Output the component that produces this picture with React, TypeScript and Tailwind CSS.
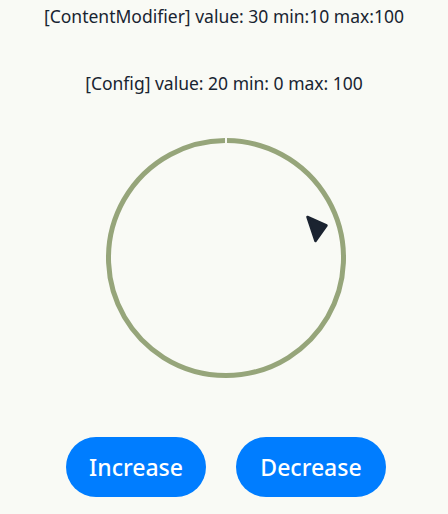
import { useState } from 'react';

const RING = '#96a57a';

function Dial() {
  return (
    <svg width="242" height="242" viewBox="0 0 242 242" className="block">
      <path
        d="M 122 3.5 A 117.5 117.5 0 1 1 120 3.5"
        fill="none"
        stroke={RING}
        strokeWidth="5"
      />
      {/* pointer */}
      <polygon
        points="202.5,80 221.5,88.5 210.5,104"
        fill="#1b2330"
        stroke="#1b2330"
        strokeWidth="2.5"
        strokeLinejoin="round"
      />
    </svg>
  );
}

export default function App() {
  const [value, setValue] = useState(30);

  return (
    <div
      className="w-[448px] h-[514px] bg-[#f9faf5] flex flex-col items-center text-[#182431]"
      style={{ fontFamily: '"Noto Sans", sans-serif' }}
    >
      <p className="mt-[4px] text-[17.5px] leading-[24px]">
        [ContentModifier] value: {value} min:10 max:100
      </p>
      <p className="mt-[43px] text-[17.5px] leading-[24px]">[Config] value: 20 min: 0 max: 100</p>

      <div className="mt-[42px] ml-[4px]">
        <Dial />
      </div>

      <div className="mt-[58px] flex gap-[30px] ml-[4px]">
        <button
          onClick={() => setValue((v) => Math.min(100, v + 10))}
          className="w-[140px] h-[60px] rounded-full bg-[#007dff] text-white text-[23px] font-medium"
        >
          Increase
        </button>
        <button
          onClick={() => setValue((v) => Math.max(10, v - 10))}
          className="w-[150px] h-[60px] rounded-full bg-[#007dff] text-white text-[23px] font-medium"
        >
          Decrease
        </button>
      </div>
    </div>
  );
}
